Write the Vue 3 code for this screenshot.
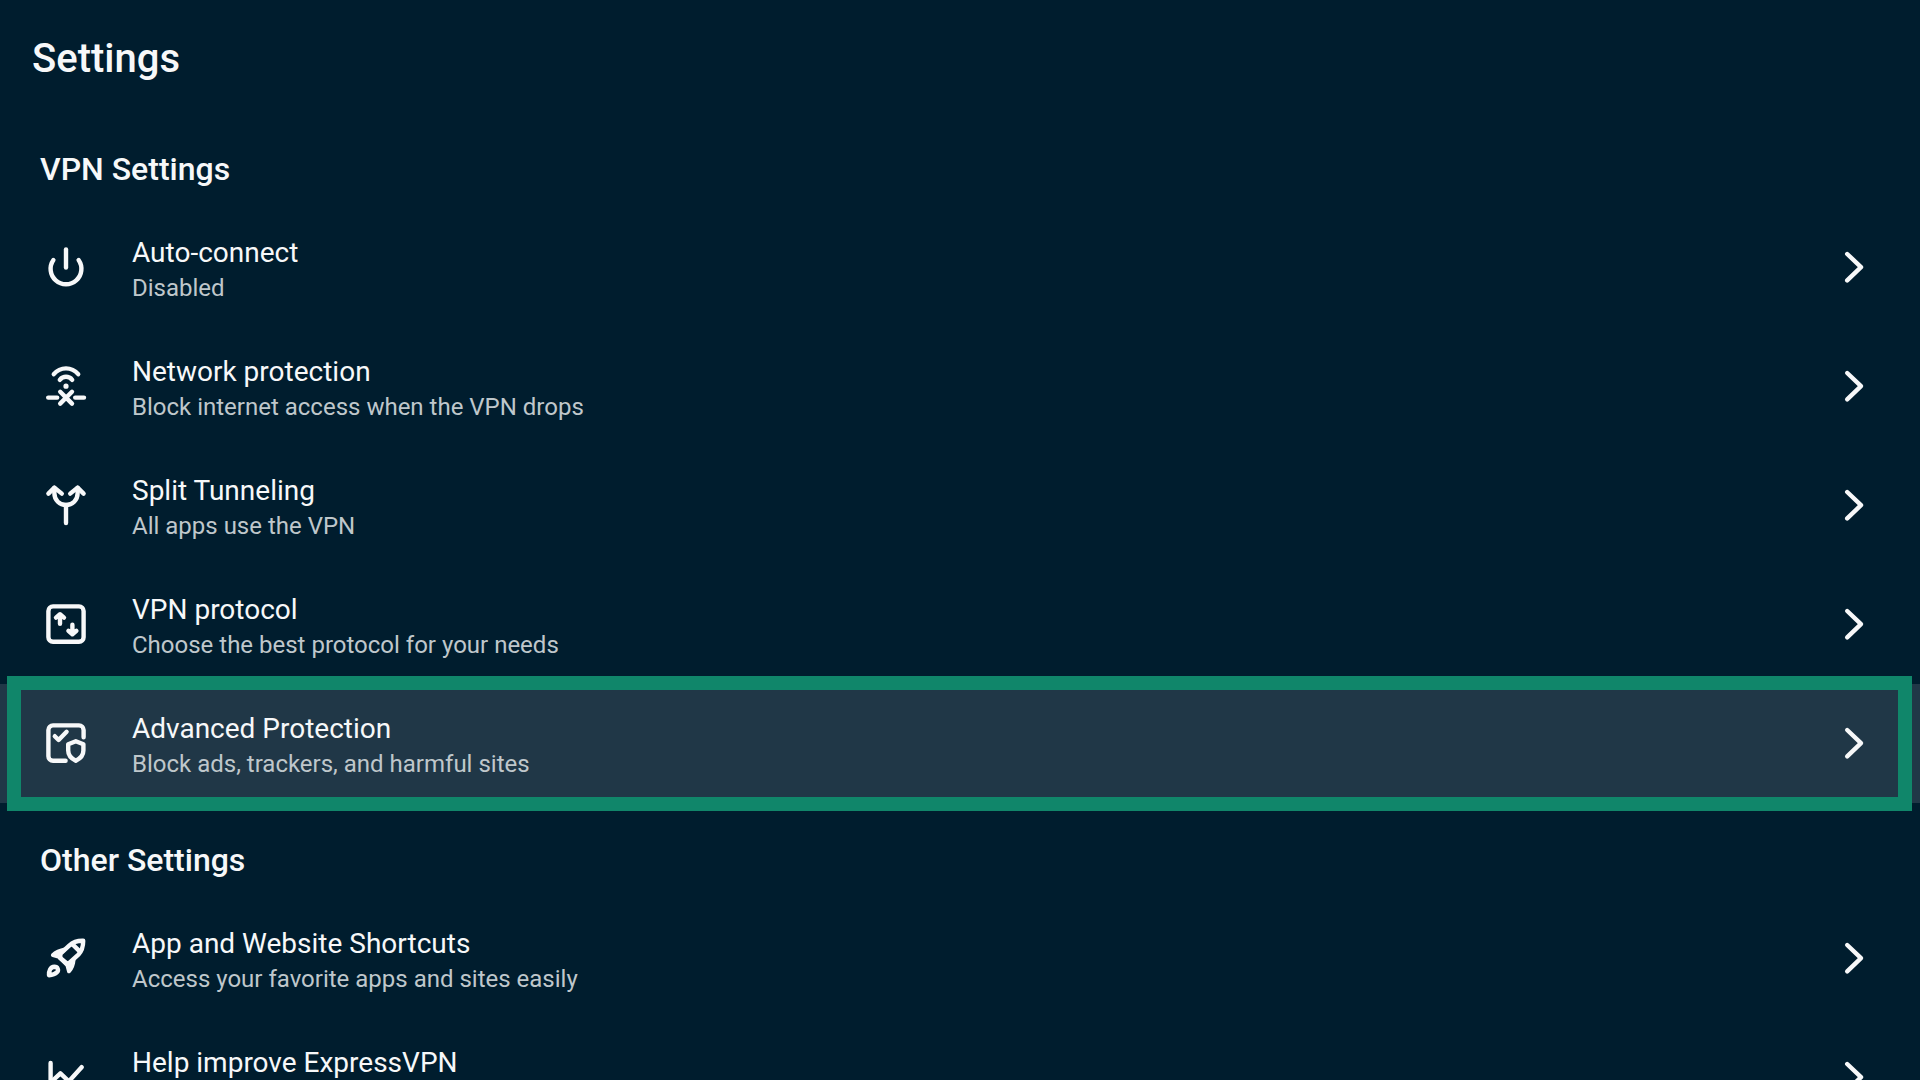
<template>
  <main class="settings">
    <header class="header">
      <h1>Settings</h1>
    </header>

    <section v-for="section in sections" :key="section.title">
      <h2>{{ section.title }}</h2>
      <ul class="list">
        <li v-for="item in section.items" :key="item.title">
          <button type="button" class="row" :class="{ active: item.title === selected }" @click="selected = item.title">
            <!-- Row icon -->
            <svg class="icon" viewBox="0 0 24 24" aria-hidden="true">
              <path v-for="d in icons[item.icon].lines" :key="d" :d="d" />
              <path v-for="d in icons[item.icon].solids" :key="d" class="solid" :d="d" />
            </svg>
            <span class="text">
              <span class="title">{{ item.title }}</span>
              <span class="subtitle">{{ item.subtitle }}</span>
            </span>
            <!-- Chevron -->
            <svg class="icon" viewBox="0 0 24 24" aria-hidden="true">
              <path d="M8.6 5L15.5 11.6L8.6 18.2" />
            </svg>
          </button>
        </li>
      </ul>
    </section>
  </main>
</template>

<script setup>
import { ref } from 'vue'

const selected = ref('Advanced Protection')

const sections = [
  {
    title: 'VPN Settings',
    items: [
      { icon: 'power', title: 'Auto-connect', subtitle: 'Disabled' },
      { icon: 'network', title: 'Network protection', subtitle: 'Block internet access when the VPN drops' },
      { icon: 'split', title: 'Split Tunneling', subtitle: 'All apps use the VPN' },
      { icon: 'protocol', title: 'VPN protocol', subtitle: 'Choose the best protocol for your needs' },
      { icon: 'shield', title: 'Advanced Protection', subtitle: 'Block ads, trackers, and harmful sites' },
    ],
  },
  {
    title: 'Other Settings',
    items: [
      { icon: 'rocket', title: 'App and Website Shortcuts', subtitle: 'Access your favorite apps and sites easily' },
      { icon: 'chart', title: 'Help improve ExpressVPN', subtitle: '' },
    ],
  },
]

const icons = {
  power: {
    lines: ['M12 2.7V11.8', 'M5.7 8A7.7 7.7 0 1 0 18.3 8'],
  },
  network: {
    lines: [
      'M5.9 5.6C9.2 1.7 14.8 1.7 18.1 5.6',
      'M8.9 8.4C10.6 6.4 13.4 6.4 15.1 8.4',
      'M9.1 14.4L15 20.3M15 14.4L9.1 20.3',
      'M3.1 17.3H7.6M16.6 17.3H21',
    ],
    solids: ['M12 10.3A1.3 1.3 0 1 1 12 12.9A1.3 1.3 0 1 1 12 10.3Z'],
  },
  split: {
    lines: [
      'M6.2 3V5.8C6.2 9 8.8 11.5 12 11.5C15.2 11.5 17.8 9 17.8 5.8V3',
      'M12 11.5V20.5',
      'M3.2 5.8L6.2 2.8L9.9 5.8',
      'M20.8 5.8L17.8 2.8L14.1 5.8',
    ],
  },
  protocol: {
    lines: [
      'M5.5 2.7H18.5A2.3 2.3 0 0 1 20.8 5V18.1A2.3 2.3 0 0 1 18.5 20.4H5.5A2.3 2.3 0 0 1 3.2 18.1V5A2.3 2.3 0 0 1 5.5 2.7Z',
      'M9 7.2V11.4M7 8.3L9 6.6L11 8.3',
      'M15.2 16V11.9M13.2 14.9L15.2 16.6L17.2 14.9',
    ],
  },
  shield: {
    lines: [
      'M20.8 8.6V5A2.3 2.3 0 0 0 18.5 2.7H5.5A2.3 2.3 0 0 0 3.2 5V18.1A2.3 2.3 0 0 0 5.5 20.4H11.8',
      'M6.4 8.1L8.3 10L12.3 5.9',
      'M16.9 10.6L20.7 12.1V15.3C20.7 17.7 18.8 19.5 16.9 20.4C15 19.5 13.1 17.7 13.1 15.3V12.1Z',
    ],
  },
  rocket: {
    lines: [
      'M9 11.4L9.1 9.4L13.6 5.3C15.6 3.5 17.9 2.8 20.6 2.9C20.6 5.7 19.9 8.1 18.2 9.8L14.2 13.4L12.9 14.6Z',
      'M15.4 4.8L18.6 7.9',
      'M3.5 20.1C3.4 18.1 4.1 16 6.2 15.9C7.9 15.9 8.5 17.6 7.5 18.6C6.5 19.6 5 20 3.5 20.1Z',
    ],
    solids: [
      'M11.3 6.3C8.8 6.9 6.2 7.8 4.7 9.4C4.2 10.1 4.5 10.8 5.2 11L7.9 11.7L11.8 15.6L12.6 18.6C12.9 19.3 13.8 19.4 14.3 18.8C15.7 17.2 16.6 15 16.8 12.2L13.4 13.7L10.2 11.7L10.1 9.7L12.2 7.8Z',
    ],
  },
  chart: {
    lines: ['M4.3 4.5V18.3A2 2 0 0 0 6.3 20.3H20.5', 'M4.8 13.8L9.2 9.7L13.4 13.7L19.8 6.6'],
  },
}
</script>

<style>
body {
  background-color: #001d2e;
}
</style>

<style scoped>
.settings {
  height: 100vh;
  overflow: hidden;
  background-color: #001d2e;
  color: #f7f8f9;
  font-family: Roboto, sans-serif;
}

.header {
  padding: 35px 32px 29px;
}

h1 {
  margin: 0;
  font-size: 40px;
  line-height: 48px;
  font-weight: 500;
}

h2 {
  margin: 0;
  padding: 37px 40px 19px;
  font-size: 32px;
  line-height: 40px;
  font-weight: 500;
}

.list {
  margin: 0;
  padding: 0;
  list-style: none;
}

.row {
  position: relative;
  display: flex;
  align-items: center;
  width: 100%;
  height: 119px;
  padding: 0 42px;
  border: none;
  background: none;
  color: inherit;
  font-family: inherit;
  text-align: left;
  cursor: pointer;
  outline: none;
}

.row.active {
  background-color: #203747;
}

/* focus frame drawn over the selected row */
.row.active::after {
  content: '';
  position: absolute;
  inset: -8px 8px -8px 7px;
  border: 14px solid #10866a;
}

.icon {
  flex: none;
  width: 48px;
  height: 48px;
  fill: none;
  stroke: #f7f8f9;
  stroke-width: 2.2;
  stroke-linecap: round;
  stroke-linejoin: round;
}

.icon .solid {
  fill: #f7f8f9;
  stroke: none;
}

.text {
  flex: 1;
  display: flex;
  flex-direction: column;
  margin-left: 42px;
}

.title {
  font-size: 28px;
  line-height: 40px;
}

.subtitle {
  min-height: 30px;
  font-size: 24px;
  line-height: 30px;
  color: #bfc7cb;
}
</style>
